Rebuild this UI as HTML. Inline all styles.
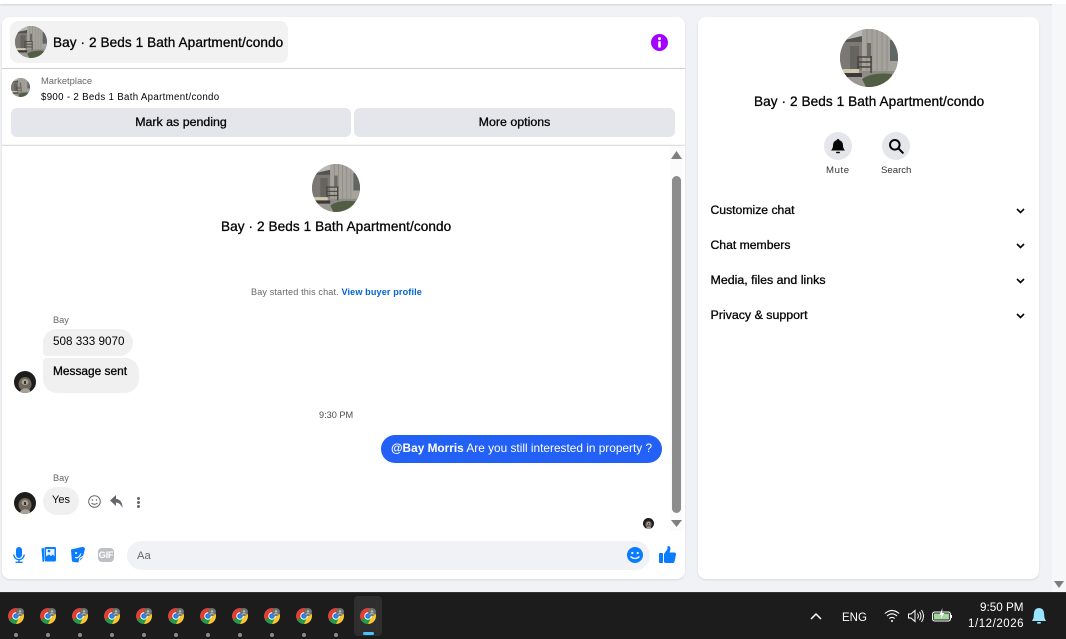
<!DOCTYPE html>
<html lang="en"><head><meta charset="utf-8"><title>Chat</title>
<style>
html,body{margin:0;padding:0;width:1066px;height:639px;overflow:hidden;background:#f0f2f5;font-family:"Liberation Sans",sans-serif;color:#050505}
div,span,svg{position:absolute}
b,i{position:static}
.t{white-space:nowrap;line-height:16px}
.sb{-webkit-text-stroke:.3px currentColor}
.card{background:#fff;border-radius:8px;box-shadow:0 1px 2px rgba(0,0,0,.1)}
.btn{background:#e4e6eb;border-radius:6px;height:29px;top:108px;text-align:center;font-size:12.4px;line-height:28px;-webkit-text-stroke:.3px #050505}
.bub{background:#f0f0f0}
.circ{background:#e4e6eb;border-radius:50%;width:28px;height:28px}
.dot{width:4px;height:4px;border-radius:50%;background:#8a8a8a;top:633px}
</style></head><body>
<svg width="0" height="0" style="position:absolute"><defs>
<symbol id="h" viewBox="0 0 58 58">
<rect width="58" height="58" fill="#8f8c88"/>
<rect x="0" y="0" width="24" height="12" fill="#b9bbb9"/>
<path d="M0 12L22 7V14H0z" fill="#55534f"/>
<rect x="0" y="13" width="24" height="28" fill="#7b7976"/>
<rect x="10" y="17" width="9" height="24" fill="#66645f"/>
<path d="M22 0H58V42H22z" fill="#a6a39d"/>
<path d="M27 0v42M32 0v42M37 0v42M42 0v42M47 0v42" stroke="#8f8c86" stroke-width="1"/>
<rect x="50" y="11" width="8" height="21" fill="#5f6663"/>
<rect x="27" y="14" width="4" height="13" fill="#6a6a68"/>
<path d="M18 28h14M18 33h14M18 38h14M18 27v17M31 27v17" stroke="#4a453c" stroke-width="1.500" fill="none"/>
<rect x="0" y="40" width="19" height="4" fill="#cfc8ae"/>
<rect x="0" y="44" width="22" height="4" fill="#3c3a36"/>
<rect x="0" y="48" width="58" height="10" fill="#9b9893"/>
<path d="M22 50q10-7 30-5v6L36 58H26z" fill="#525e44"/>
</symbol>
<symbol id="d" viewBox="0 0 22 22">
<rect width="22" height="22" fill="#1e1d1b"/>
<ellipse cx="11" cy="13" rx="6.500" ry="7" fill="#6d665c"/>
<ellipse cx="11" cy="11" rx="3.500" ry="3" fill="#a9a296"/>
<path d="M6 20q5-5 10-1v3H6z" fill="#a8a296"/>
<rect x="10" y="10" width="2" height="3" fill="#3a352f"/>
</symbol>
<symbol id="c" viewBox="0 0 16 16">
<circle cx="8" cy="8" r="8" fill="#dd4035"/>
<path d="M8 8L1.100 12A8 8 0 0 0 8 16L11.500 9z" fill="#1f9d48"/>
<path d="M8 4.500h7.200A8 8 0 0 1 8 16L11 10z" fill="#f7c92f"/>
<circle cx="8" cy="8" r="3.700" fill="#fff"/>
<circle cx="8" cy="8" r="2.800" fill="#2f7ee6"/>
<circle cx="12" cy="4" r="4" fill="#6a7170"/>
<circle cx="12" cy="3.400" r="1.300" fill="#b9b3ac"/>
<path d="M9.600 6.600q2.400-2.200 4.800 0" stroke="#b9b3ac" stroke-width="1" fill="none"/>
</symbol>
</defs></svg>

<div style="left:0;top:0;width:1066px;height:4px;background:#fff;box-shadow:0 1px 2px rgba(0,0,0,.14)"></div>
<div style="left:1052px;top:4px;width:14px;height:588px;background:#f6f7f9"></div>
<svg style="left:1054px;top:581px" width="10" height="8"><path d="M0 0h10L5 7z" fill="#7d7d7d"/></svg>

<!-- main card -->
<div class="card" style="left:2px;top:17px;width:683px;height:562px"></div>
<div style="left:10px;top:21px;width:278px;height:42px;background:#f2f2f2;border-radius:8px"></div>
<svg style="left:15px;top:26px;border-radius:50%" width="32" height="32"><use href="#h" width="32" height="32"/></svg>
<div class="t sb" style="left:53px;top:35px;font-size:13.6px;letter-spacing:.08px">Bay · 2 Beds 1 Bath Apartment/condo</div>
<svg style="left:651px;top:34px" width="17" height="17" viewBox="0 0 17 17"><circle cx="8.500" cy="8.500" r="8.500" fill="#a200ff"/><circle cx="8.500" cy="4.600" r="1.500" fill="#fff"/><rect x="7.200" y="7.200" width="2.600" height="6.400" rx=".6" fill="#fff"/></svg>
<div style="left:2px;top:68px;width:683px;height:1px;background:#ced0d4"></div>

<svg style="left:11px;top:78px;border-radius:50%" width="19" height="19"><use href="#h" width="19" height="19"/></svg>
<div class="t" style="left:41px;top:73px;font-size:9.4px;color:#65676b">Marketplace</div>
<div class="t" style="left:41px;top:90px;font-size:9.7px;letter-spacing:.32px">$900 - 2 Beds 1 Bath Apartment/condo</div>
<div class="btn" style="left:11px;width:340px">Mark as pending</div>
<div class="btn" style="left:354px;width:321px">More options</div>
<div style="left:2px;top:145px;width:683px;height:1px;background:#dddfe2;box-shadow:0 -1px 1px rgba(0,0,0,.06)"></div>

<!-- scrollbar -->
<div style="left:670px;top:146px;width:13px;height:385px;background:#fbfbfb"></div>
<svg style="left:671px;top:151px" width="11" height="8"><path d="M5.500 0L11 8H0z" fill="#7f7f7f"/></svg>
<div style="left:672px;top:176px;width:9px;height:337px;background:#8c8c8c;border-radius:5px"></div>
<svg style="left:671px;top:520px" width="11" height="8"><path d="M0 0h11L5.500 7z" fill="#7f7f7f"/></svg>

<!-- chat head -->
<svg style="left:312px;top:164px;border-radius:50%" width="48" height="48"><use href="#h" width="48" height="48"/></svg>
<div class="t sb" style="left:221px;top:219px;font-size:13.6px;letter-spacing:.08px">Bay · 2 Beds 1 Bath Apartment/condo</div>
<div class="t" style="left:251px;top:284px;font-size:9.1px;letter-spacing:.13px;color:#65676b">Bay started this chat. <span style="position:static;color:#0064d1;font-weight:bold">View buyer profile</span></div>

<div class="t" style="left:53px;top:312px;font-size:9.2px;color:#65676b">Bay</div>
<div class="bub" style="left:43px;top:329px;width:90px;height:27px;border-radius:14px 14px 14px 4px"></div>
<div class="t" style="left:53px;top:334px;font-size:11.7px">508 333 9070</div>
<div class="bub" style="left:43px;top:358px;width:96px;height:35px;border-radius:4px 14px 14px 14px"></div>
<div class="t sb" style="left:53px;top:363px;font-size:11.9px">Message sent</div>
<svg style="left:14px;top:371px;border-radius:50%" width="22" height="22"><use href="#d" width="22" height="22"/></svg>

<div class="t" style="left:319px;top:407px;font-size:9.2px;color:#4b4c4f">9:30 PM</div>

<div style="left:381px;top:435px;width:281px;height:28px;background:#2360f5;border-radius:14px"></div>
<div class="t" style="left:391px;top:440px;font-size:11.85px;color:#fff"><b>@Bay Morris</b> Are you still interested in property ?</div>

<div class="t" style="left:53px;top:470px;font-size:9.2px;color:#65676b">Bay</div>
<div class="bub" style="left:43px;top:487px;width:36px;height:28px;border-radius:14px"></div>
<div class="t" style="left:52px;top:492px;font-size:11px">Yes</div>
<svg style="left:14px;top:492px;border-radius:50%" width="22" height="22"><use href="#d" width="22" height="22"/></svg>
<svg style="left:88px;top:495px" width="13" height="13" viewBox="0 0 13 13" fill="none" stroke="#65676b"><circle cx="6.500" cy="6.500" r="5.800"/><circle cx="4.500" cy="5" r=".8" fill="#65676b" stroke="none"/><circle cx="8.500" cy="5" r=".8" fill="#65676b" stroke="none"/><path d="M3.500 8q3 2.600 6 0"/></svg>
<svg style="left:110px;top:495px" width="13" height="13" viewBox="0 0 13 13"><path d="M6 0L0 5.500 6 11V7.500q4 0 6.500 5.500Q12.500 5 6 3.800z" fill="#65676b"/></svg>
<div style="left:137px;top:497px;width:3px;height:3px;border-radius:50%;background:#65676b"></div>
<div style="left:137px;top:501px;width:3px;height:3px;border-radius:50%;background:#65676b"></div>
<div style="left:137px;top:505px;width:3px;height:3px;border-radius:50%;background:#65676b"></div>
<svg style="left:643px;top:518px;border-radius:50%" width="11" height="11"><use href="#d" width="11" height="11"/></svg>

<!-- composer -->
<svg style="left:13px;top:547px" width="12" height="16" viewBox="0 0 12 16"><rect x="3" y="0" width="6" height="11" rx="3" fill="#0a7cff"/><path d="M.8 7.500a5.200 5.200 0 0 0 10.400 0M6 12.800v2M2.500 15.300h7" fill="none" stroke="#0a7cff" stroke-width="1.300"/></svg>
<svg style="left:41px;top:547px" width="15" height="16" viewBox="0 0 15 16"><path d="M.5 1.500L3 1v14L1.500 14.500z" fill="#0a7cff"/><rect x="3.500" y="0" width="11.500" height="14.500" rx="1.500" fill="#0a7cff"/><rect x="5" y="2" width="8.500" height="7.500" fill="#e6f1ff"/><circle cx="8" cy="4" r="1.300" fill="#0a7cff"/><path d="M5 9.500l3-2 2 1.500 2-1.500 1.500 2z" fill="#0a7cff"/></svg>
<svg style="left:70px;top:547px" width="15" height="16" viewBox="0 0 15 16"><path d="M1 2.500L12 0q2.500-.2 3 2L12.500 11 8 15.500 3.500 15Q2 14.800 1.800 13z" fill="#0a7cff"/><circle cx="6" cy="6" r="1" fill="#fff"/><path d="M5 10.500q3.500 1.500 6-4" stroke="#fff" fill="none"/><path d="M9 15l1-4 4-2" stroke="#fff" fill="none"/></svg>
<div style="left:98px;top:548px;width:16px;height:14px;border-radius:4px;background:#bcc0c4;color:#fff;font-size:9px;font-weight:bold;line-height:14px;text-align:center;letter-spacing:-.2px">GIF</div>
<div style="left:127px;top:541px;width:523px;height:29px;background:#f0f2f5;border-radius:15px"></div>
<div class="t" style="left:137px;top:548px;font-size:11.2px;color:#65676b">Aa</div>
<svg style="left:627px;top:547px" width="16" height="16" viewBox="0 0 16 16"><circle cx="8" cy="8" r="8" fill="#0a7cff"/><circle cx="5.300" cy="6" r="1.100" fill="#fff"/><circle cx="10.700" cy="6" r="1.100" fill="#fff"/><path d="M3.500 9.500q4.500 4 9 0" stroke="#fff" stroke-width="1.200" fill="none"/></svg>
<svg style="left:659px;top:546px" width="17" height="17" viewBox="0 0 17 17"><rect x="0" y="7" width="4" height="10" rx=".8" fill="#0a7cff"/><path d="M5 8L8.500 3V.8q0-.8 1-.8 2 .3 2 3L10.500 6.500h5q1.700.2 1.500 2l-1.300 6.500q-.4 2-2 2H7q-2 0-2-1.500z" fill="#0a7cff"/></svg>

<!-- right card -->
<div class="card" style="left:698px;top:17px;width:341px;height:562px"></div>
<svg style="left:840px;top:29px;border-radius:50%" width="58" height="58"><use href="#h" width="58" height="58"/></svg>
<div class="t sb" style="left:754px;top:94px;font-size:13.6px;letter-spacing:.08px">Bay · 2 Beds 1 Bath Apartment/condo</div>
<div class="circ" style="left:824px;top:132px"></div>
<svg style="left:831px;top:139px" width="14" height="15" viewBox="0 0 14 15"><path d="M7 0q1.200 0 1.500 1.200Q12 2.200 12 6.500q0 2.800 2 5H0q2-2.200 2-5 0-4.300 3.500-5.300Q5.800 0 7 0z" fill="#050505"/><rect x="5" y="12.700" width="4" height="1.500" rx=".7" fill="#050505"/></svg>
<div class="circ" style="left:882px;top:132px"></div>
<svg style="left:888px;top:138px" width="16" height="16" viewBox="0 0 16 16" fill="none" stroke="#050505" stroke-width="2"><circle cx="6.800" cy="6.800" r="4.800"/><path d="M10.500 10.500l4.300 4.300" stroke-linecap="round"/></svg>
<div class="t" style="left:826px;top:163px;font-size:9.6px;letter-spacing:.6px;color:#333">Mute</div>
<div class="t" style="left:881px;top:163px;font-size:9.6px;color:#333">Search</div>

<div class="t sb" style="left:710.500px;top:202px;font-size:12.2px">Customize chat</div>
<div class="t sb" style="left:710.500px;top:237px;font-size:12.2px">Chat members</div>
<div class="t sb" style="left:710.500px;top:272px;font-size:12.4px">Media, files and links</div>
<div class="t sb" style="left:710.500px;top:307px;font-size:12.4px">Privacy &amp; support</div>
<svg style="left:1016px;top:208px" width="9" height="6"><path d="M1 1l3.500 3.500L8 1" fill="none" stroke="#050505" stroke-width="1.600"/></svg>
<svg style="left:1016px;top:243px" width="9" height="6"><path d="M1 1l3.500 3.500L8 1" fill="none" stroke="#050505" stroke-width="1.600"/></svg>
<svg style="left:1016px;top:278px" width="9" height="6"><path d="M1 1l3.500 3.500L8 1" fill="none" stroke="#050505" stroke-width="1.600"/></svg>
<svg style="left:1016px;top:313px" width="9" height="6"><path d="M1 1l3.500 3.500L8 1" fill="none" stroke="#050505" stroke-width="1.600"/></svg>

<!-- taskbar -->
<div style="left:0;top:592px;width:1066px;height:47px;background:#1c1c1c;border-top:1px solid #333;box-sizing:border-box"></div>
<div style="left:354px;top:596px;width:28px;height:40px;background:#2e2e2e;border-radius:4px"></div>
<svg style="left:8px;top:608px" width="16" height="16"><use href="#c" width="16" height="16"/></svg>
<svg style="left:40px;top:608px" width="16" height="16"><use href="#c" width="16" height="16"/></svg>
<svg style="left:72px;top:608px" width="16" height="16"><use href="#c" width="16" height="16"/></svg>
<svg style="left:104px;top:608px" width="16" height="16"><use href="#c" width="16" height="16"/></svg>
<svg style="left:136px;top:608px" width="16" height="16"><use href="#c" width="16" height="16"/></svg>
<svg style="left:168px;top:608px" width="16" height="16"><use href="#c" width="16" height="16"/></svg>
<svg style="left:200px;top:608px" width="16" height="16"><use href="#c" width="16" height="16"/></svg>
<svg style="left:232px;top:608px" width="16" height="16"><use href="#c" width="16" height="16"/></svg>
<svg style="left:264px;top:608px" width="16" height="16"><use href="#c" width="16" height="16"/></svg>
<svg style="left:296px;top:608px" width="16" height="16"><use href="#c" width="16" height="16"/></svg>
<svg style="left:328px;top:608px" width="16" height="16"><use href="#c" width="16" height="16"/></svg>
<svg style="left:360px;top:608px" width="16" height="16"><use href="#c" width="16" height="16"/></svg>
<div class="dot" style="left:14px"></div><div class="dot" style="left:46px"></div><div class="dot" style="left:78px"></div><div class="dot" style="left:110px"></div><div class="dot" style="left:142px"></div><div class="dot" style="left:174px"></div><div class="dot" style="left:206px"></div><div class="dot" style="left:238px"></div><div class="dot" style="left:270px"></div><div class="dot" style="left:302px"></div><div class="dot" style="left:334px"></div>
<div style="left:363px;top:632px;width:11px;height:3px;border-radius:2px;background:#4cc2ff"></div>

<svg style="left:810px;top:612px" width="12" height="8"><path d="M1 7l5-5 5 5" fill="none" stroke="#fff" stroke-width="1.500"/></svg>
<div class="t" style="left:842px;top:610px;font-size:11.5px;color:#fff">ENG</div>
<svg style="left:884px;top:609px" width="16" height="14" viewBox="0 0 16 14" fill="none" stroke="#fff" stroke-width="1.100"><path d="M.8 4.500q7-6 14.400 0M3 7q5-4.300 10 0M5.300 9.500q2.700-2.200 5.400 0"/><circle cx="8" cy="12" r="1" fill="#fff" stroke="none"/></svg>
<svg style="left:908px;top:609px" width="16" height="14" viewBox="0 0 16 14" fill="none" stroke="#fff" stroke-width="1"><path d="M.5 5h2.500L7 1.500v11L3 9H.5zM9.500 4.500q1.800 2.500 0 5M11.500 2.800q3 4.200 0 8.400M13.500 1q4 6 0 12"/></svg>
<svg style="left:932px;top:608px" width="20" height="15" viewBox="0 0 20 15"><rect x=".6" y="4" width="17.800" height="9" rx="2" fill="#1c1c1c" stroke="#fff" stroke-width="1.100"/><rect x="2" y="5.500" width="15" height="6" fill="#a3d9a0"/><rect x="18.700" y="7" width="1.300" height="3" fill="#fff"/><path d="M10.500 0L7.500 7h2.200l-1 4 3.500-6H10z" fill="#fff"/></svg>
<div class="t" style="left:980px;top:600px;font-size:11.7px;color:#fff">9:50 PM</div>
<div class="t" style="left:968px;top:616px;font-size:11.5px;letter-spacing:.55px;color:#fff">1/12/2026</div>
<svg style="left:1032px;top:608px" width="14" height="16" viewBox="0 0 14 16"><path d="M7 0q4.500 0 5 5l.5 5 1.500 3H0l1.500-3L2 5q.5-5 5-5z" fill="#9ae6ff"/><rect x="5" y="14" width="4" height="1.600" rx=".8" fill="#9ae6ff"/></svg>
</body></html>
